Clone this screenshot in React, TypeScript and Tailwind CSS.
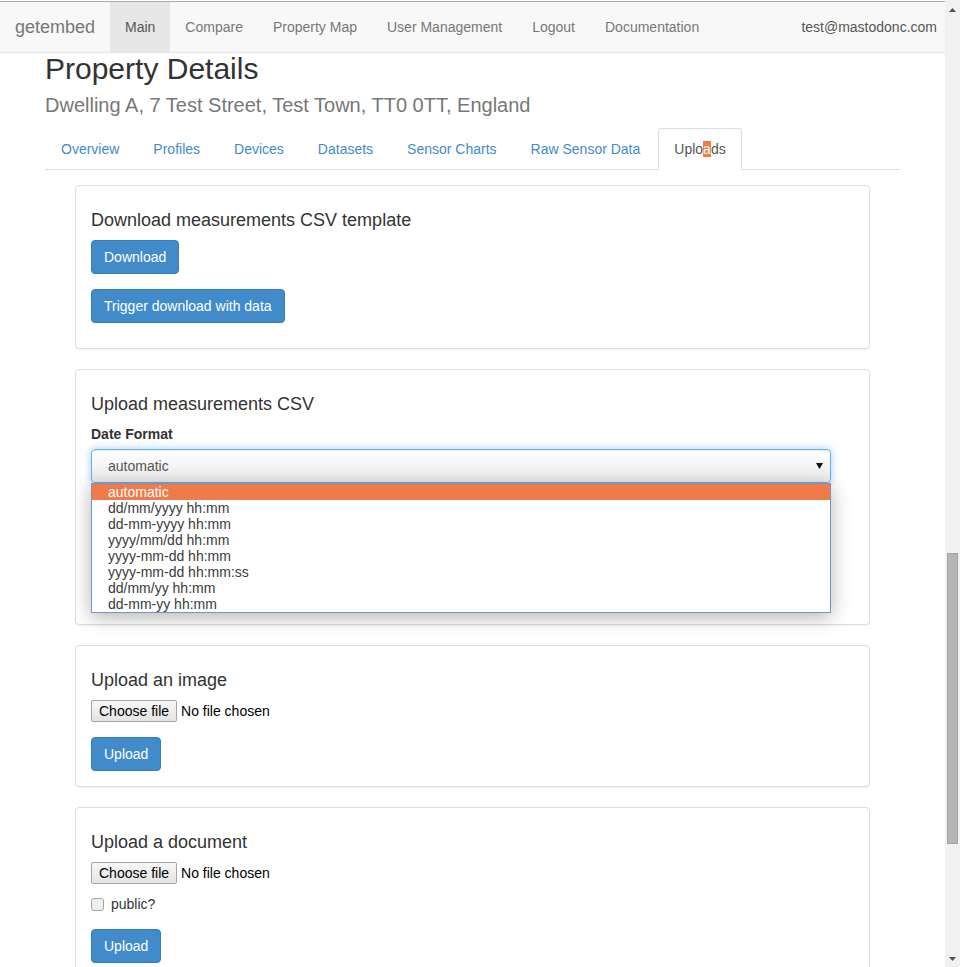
import React from 'react'

const navLinks = ['Main', 'Compare', 'Property Map', 'User Management', 'Logout', 'Documentation']
const tabs = ['Overview', 'Profiles', 'Devices', 'Datasets', 'Sensor Charts', 'Raw Sensor Data']
const dateFormats = [
  'automatic',
  'dd/mm/yyyy hh:mm',
  'dd-mm-yyyy hh:mm',
  'yyyy/mm/dd hh:mm',
  'yyyy-mm-dd hh:mm',
  'yyyy-mm-dd hh:mm:ss',
  'dd/mm/yy hh:mm',
  'dd-mm-yy hh:mm',
]

function Panel({ title, children }: { title: string; children: React.ReactNode }) {
  return (
    <div className="mb-[20px] rounded-[4px] border border-[#ddd] bg-white p-[15px] shadow-[0_1px_1px_rgba(0,0,0,0.05)]">
      <h4 className="mt-[9px] mb-[10px] text-[18px] leading-[20px] font-normal text-[#333]">{title}</h4>
      {children}
    </div>
  )
}

function PrimaryButton({ children }: { children: React.ReactNode }) {
  return (
    <button className="block rounded-[4px] border border-[#357ebd] bg-[#428bca] px-[12px] py-[6px] text-[14px] leading-[20px] text-white">
      {children}
    </button>
  )
}

function FileInput() {
  return (
    <div className="flex h-[22px] items-center text-[14px] text-black">
      <span className="flex h-[22px] items-center rounded-[2px] border border-[#a6a6a6] bg-linear-to-b from-[#f7f7f7] to-[#e4e4e4] pr-[7px] pl-[7px]">
        Choose file
      </span>
      <span className="ml-[4px]">No file chosen</span>
    </div>
  )
}

export default function App() {
  return (
    <div className="flex h-[967px] w-[960px] overflow-hidden bg-white font-['Liberation_Sans',Arial,sans-serif] text-[14px] text-[#333]">
      <div className="w-[945px] shrink-0 overflow-hidden">
        <div className="h-px bg-white" />
        {/* navbar */}
        <nav className="flex h-[52px] border-t border-b border-t-[#ababab] border-b-[#e7e7e7] bg-[#f8f8f8]">
          <span className="w-[110px] pl-[15px] text-[18px] leading-[50px] text-[#777]">getembed</span>
          {navLinks.map((l) => (
            <span
              key={l}
              className={`px-[15px] leading-[50px] ${l === 'Main' ? 'bg-[#e7e7e7] text-[#555]' : 'text-[#777]'}`}
            >
              {l}
            </span>
          ))}
          <span className="ml-auto pr-[8px] leading-[50px] text-[#555]">test@mastodonc.com</span>
        </nav>

        <div className="px-[45px]">
          <h1 className="-mt-px text-[30px] leading-[33px] font-normal text-[#333]">Property Details</h1>
          <div className="mt-[9px] text-[20px] leading-[22px] text-[#777]">
            Dwelling A, 7 Test Street, Test Town, TT0 0TT, England
          </div>

          {/* tabs */}
          <ul className="mt-[12px] flex border-b border-[#ddd]">
            {tabs.map((t) => (
              <li key={t} className="-mb-px mr-[2px]">
                <span className="block rounded-t-[4px] border border-transparent px-[15px] py-[10px] leading-[20px] text-[#428bca]">
                  {t}
                </span>
              </li>
            ))}
            <li className="-mb-px mr-[2px]">
              <span className="block rounded-t-[4px] border border-[#ddd] border-b-transparent bg-white px-[15px] py-[10px] leading-[20px] text-[#555]">
                Uplo<span className="bg-[#ef7a4a] text-white">a</span>ds
              </span>
            </li>
          </ul>

          <div className="mt-[15px] px-[30px]">
            <Panel title="Download measurements CSV template">
              <PrimaryButton>Download</PrimaryButton>
              <div className="mt-[15px] mb-[10px]">
                <PrimaryButton>Trigger download with data</PrimaryButton>
              </div>
            </Panel>

            <Panel title="Upload measurements CSV">
              <label className="mb-[5px] block leading-[20px] font-bold text-[#333]">Date Format</label>
              <div className="relative w-[740px]">
                <div className="relative flex h-[34px] items-center rounded-[4px] border border-[#66afe9] bg-linear-to-b from-white to-[#ebebeb] pl-[16px] text-[#555] shadow-[inset_0_1px_1px_rgba(0,0,0,0.075),0_0_8px_rgba(102,175,233,0.6)]">
                  automatic
                  <svg className="absolute top-[13px] right-[7px]" width="7" height="6" viewBox="0 0 7 6">
                    <polygon points="0,0 7,0 3.5,6" fill="#111" />
                  </svg>
                </div>
                <ul className="absolute top-full left-0 z-10 w-[740px] border border-[#7496c0] bg-white shadow-[0_4px_18px_rgba(0,0,0,0.3)]">
                  {dateFormats.map((f, i) => (
                    <li
                      key={f}
                      className={`h-[16px] pl-[16px] text-[14px] leading-[16px] ${i === 0 ? 'bg-[#ef7a4a] text-white' : 'text-[#3a3a3a]'}`}
                    >
                      {f}
                    </li>
                  ))}
                </ul>
              </div>
              {/* room taken by the fields under the open list */}
              <div className="h-[126px]" />
            </Panel>

            <Panel title="Upload an image">
              <FileInput />
              <div className="mt-[15px]">
                <PrimaryButton>Upload</PrimaryButton>
              </div>
            </Panel>

            <Panel title="Upload a document">
              <FileInput />
              <div className="mt-[10px] flex h-[20px] items-center">
                <span className="h-[13px] w-[13px] rounded-[3px] border border-[#a6a6a6] bg-[#efefef]" />
                <span className="ml-[7px]">public?</span>
              </div>
              <div className="mt-[15px]">
                <PrimaryButton>Upload</PrimaryButton>
              </div>
            </Panel>
          </div>
        </div>
      </div>

      {/* scrollbar */}
      <div className="relative w-[15px] shrink-0 bg-[#f1f1f1]">
        <svg className="absolute top-[8px] left-[4px]" width="7" height="4" viewBox="0 0 7 4">
          <polygon points="3.5,0 7,4 0,4" fill="#505050" />
        </svg>
        <div className="absolute top-[553px] left-[2px] h-[291px] w-[11px] border border-[#a3a3a3] bg-[#b5b5b5]" />
        <svg className="absolute top-[957px] left-[4px]" width="7" height="4" viewBox="0 0 7 4">
          <polygon points="0,0 7,0 3.5,4" fill="#505050" />
        </svg>
      </div>
    </div>
  )
}
